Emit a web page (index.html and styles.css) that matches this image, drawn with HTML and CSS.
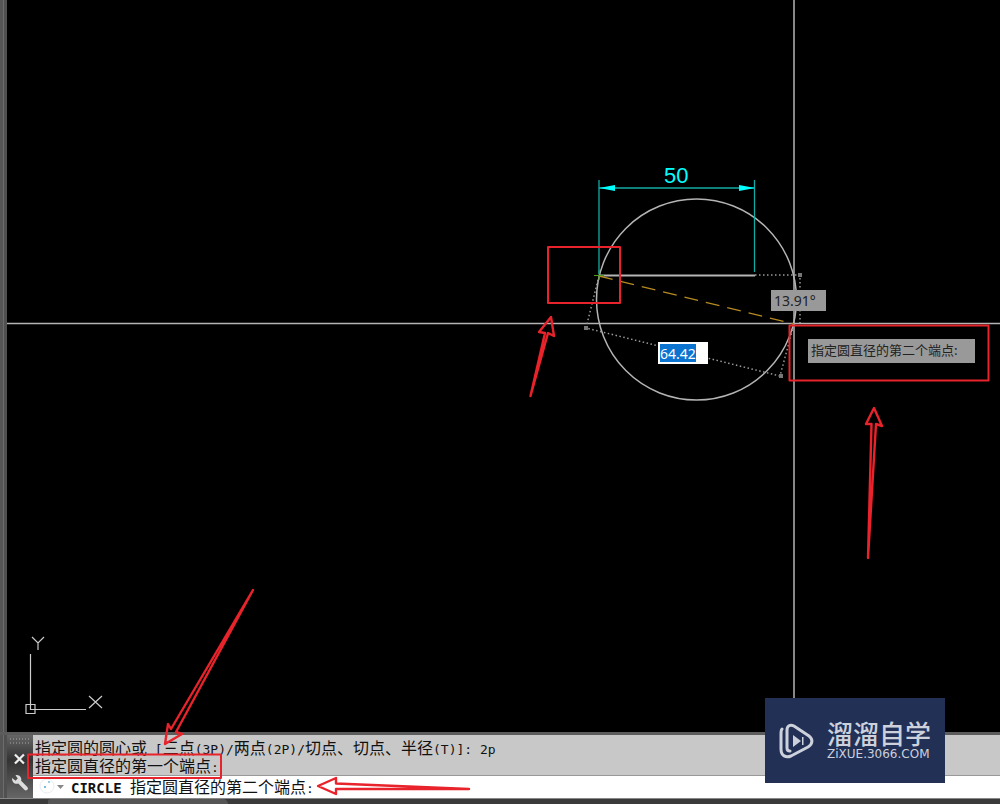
FILE: index.html
```
<!DOCTYPE html>
<html lang="zh-CN">
<head>
<meta charset="utf-8">
<title>CIRCLE</title>
<link rel="stylesheet" href="styles.css">
</head>
<body>
<div class="app">
  <div class="workspace">
    <div class="window-edge"></div>
    <main class="viewport"></main>
  </div>
  <section class="command">
    <div class="window-edge"></div>
    <div class="command-tools">
      <svg class="grip" viewBox="0 0 20 6" aria-hidden="true"><path d="M0 1h20M0 5h20" stroke="#aaa" stroke-width="1" stroke-dasharray="1 2"/></svg>
      <button class="tool" type="button" aria-label="关闭"><svg viewBox="0 0 16 16"><path d="M3.500 4l8 8M11.500 4l-8 8" stroke="#eee" stroke-width="2"/></svg></button>
      <button class="tool" type="button" aria-label="自定义"><svg viewBox="0 0 16 16"><path d="M1 3.500 4 6 6 4 4 1C7 0 10 3 9 6l5.500 5.500a1.800 1.800 0 0 1-2.600 2.600L6.500 8.500C3.500 9.500.5 7 1 3.500Z" fill="#ddd"/></svg></button>
    </div>
    <div class="command-body">
      <div class="history">
        <p>指定圆的圆心或<span class="half"> [</span>三点<span class="half">(3P)/</span>两点<span class="half">(2P)/</span>切点、切点、半径<span class="half">(T)]: 2p</span></p>
        <p>指定圆直径的第一个端点<span class="half">:</span></p>
      </div>
      <div class="prompt">
        <svg class="recent" viewBox="0 0 26 16" aria-hidden="true"><circle cx="8" cy="8" r="7" fill="none" stroke="#e6edf2" stroke-width="1"/><circle cx="6" cy="9" r="1" fill="#48a9d8"/><circle cx="10" cy="4" r="1" fill="#76bfe0"/><path d="M18 7h7l-3.500 4z" fill="#888"/></svg>
        <label for="cmd"><b class="half name">CIRCLE </b>指定圆直径的第二个端点<span class="half">:</span></label>
        <input id="cmd" class="cmd-input" type="text">
      </div>
    </div>
  </section>
  <footer class="status"><div class="status-tab"></div></footer>

  <svg class="drawing" viewBox="0 0 1000 804" aria-hidden="true">
    <g fill="none" stroke="#b4b4b4" stroke-width="1.500">
      <path d="M7 323.500H1000M794 0V732"/>
      <ellipse cx="696.500" cy="299.500" rx="100" ry="100.500"/>
      <path d="M599 275.500H755" stroke-width="2"/>
    </g>
    <g fill="none" stroke="#999" stroke-width="1.500" stroke-dasharray="1.500 2.500">
      <path d="M755 275H800V323M599 276 586 328 780 376 794 324"/>
    </g>
    <path d="M798 273h4v4h-4zM584 326h4v4h-4zM779 374h4v4h-4z" fill="#777"/>
    <path d="M599 276 794 324" stroke="#b78a22" stroke-width="1.300" stroke-dasharray="14 8"/>
    <path d="M594 275.500h10M599 270v10" stroke="#4f9d1d" stroke-width="1"/>
    <g stroke="#12aaa5" stroke-width="1.300" fill="none"><path d="M599 180V274M754.500 180V272M599 188H755"/></g>
    <path d="M599 188l16-3v6zM755 188l-16-3v6z" fill="#0ff"/>
    <text class="dimension" x="664" y="183">50</text>
    <g fill="none" stroke="#ccc" stroke-width="1.200">
      <path d="M30.500 654V709.500H86M26 704.500h9v9h-9zM32 637l6 6 6-6M38 643v7M89 696l13 12M102 696l-13 12"/>
    </g>
  </svg>

  <output class="tip angle">13.91°</output>
  <input class="distance" type="text" value="64.42" aria-label="直径">
  <output class="tip hint">指定圆直径的第二个端点:</output>

  <svg class="drawing" viewBox="0 0 1000 804" aria-hidden="true">
    <g fill="none" stroke="#e8232b" stroke-width="2" stroke-linejoin="round" stroke-linecap="round">
      <path d="M548 247h72v56h-72zM789.500 325.500h199v55h-199zM28 754.500h193v23.500H28z"/>
      <g stroke-width="2.400">
      <path d="M530.500 396 545 333l-6-1 12-15 3 19-6-3z"/>
      <path d="M868 558 871.500 424h-5.500l8-16 8 18-6-2z"/>
      <path d="M253 590 171 729l-3-5-3 20 17-10-6-2z"/>
      <path d="M469 789 336 783.500v-5.500L318 786l18 8v-5z"/>
      </g>
    </g>
  </svg>

  <aside class="brand">
    <svg class="brand-mark" viewBox="0 0 36 36" aria-hidden="true"><path d="M3 6C2 7 2 9 2 11v15c0 7 5 9 10 7l17-9c5-3 5-8 1-11L15 3C11 1 8 3 8 7v18c0 2 1 3 3 3" fill="none" stroke="#cdd1dc" stroke-linecap="round" stroke-width="3"/><path d="M14 12l8 6-8 6zM23 14h1.500v8H23z" fill="#cdd1dc"/></svg>
    <div class="brand-text"><strong>溜溜自学</strong><span>ZiXUE.3066.COM</span></div>
  </aside>
</div>
</body>
</html>
```
FILE: styles.css
```
* { box-sizing: border-box; }
body {
  margin: 0;
  background: #000;
  font-family: "Noto Sans", "Noto Sans CJK SC", sans-serif;
}
button, input { font: inherit; border: 0; padding: 0; background: none; }
.app {
  position: relative;
  display: flex;
  flex-direction: column;
  min-height: 100vh;
  overflow: hidden;
}
.workspace { display: flex; flex: 1; }
.viewport { flex: 1; background: #000; }
.window-edge {
  flex: none;
  width: 7px;
  background: linear-gradient(90deg, #555 0 3px, #6c6c6c 3px 4px, #505050 4px);
}
.command { display: flex; border-top: 3px solid #5c5c5c; border-bottom: 1px solid #888; }
.command-tools {
  display: flex;
  flex-direction: column;
  align-items: center;
  gap: 6px;
  width: 26px;
  padding-top: 3px;
  background: linear-gradient(#666, #333 40%, #666);
}
.grip { width: 20px; height: 6px; }
.tool { width: 18px; height: 18px; cursor: pointer; }
.tool svg { display: block; width: 18px; height: 18px; }
.command-body {
  flex: 1;
  color: #111;
  font-family: "Noto Sans CJK SC", sans-serif;
  font-size: 16px;
  line-height: 18px;
}
.history { padding: 3px 2px 1px; background: #c8c8c8; border-bottom: 1px solid #999; }
.history p { margin: 0; white-space: nowrap; }
.half { font-family: "DejaVu Sans Mono", monospace; font-size: 13px; line-height: 0; white-space: pre; }
.name { font-size: 14px; }
.prompt { display: flex; align-items: center; height: 22px; padding: 0 0 2px 6px; background: #fff; }
.recent { width: 26px; height: 16px; margin-right: 6px; }
.cmd-input { flex: 1; outline: 0; }
.status { height: 5px; padding-left: 48px; background: #3a3a3a; }
.status-tab { width: 180px; height: 5px; background: #555; border-radius: 4px 8px 0 0; }
.drawing {
  position: absolute;
  inset: 0;
  width: 100%;
  height: 100%;
  pointer-events: none;
}
.dimension { fill: #0ff; font-family: "Liberation Sans", sans-serif; font-size: 22px; }
.tip, .distance { position: absolute; font-size: 14px; }
.tip { background: #999; color: #222; white-space: nowrap; }
.angle { left: 771px; top: 290px; width: 55px; height: 21px; padding-left: 3px; line-height: 21px; }
.hint {
  left: 808px;
  top: 339px;
  width: 167px;
  height: 24px;
  padding-left: 3px;
  font-family: "Noto Sans CJK SC", sans-serif;
  font-size: 13px;
  line-height: 21px;
}
.distance {
  left: 658px;
  top: 342px;
  width: 50px;
  height: 22px;
  padding-left: 2px;
  color: #fff;
  background: linear-gradient(#0b73d0, #0b73d0) 2px 2px / 36px 18px no-repeat #fff;
}
.brand {
  position: absolute;
  left: 765px;
  top: 698px;
  display: flex;
  align-items: center;
  gap: 12px;
  width: 180px;
  height: 85px;
  padding-left: 14px;
  background: #223056;
  color: #cdd1dc;
}
.brand-mark { width: 36px; height: 36px; }
.brand-text { display: flex; flex-direction: column; padding-bottom: 4px; white-space: nowrap; }
.brand-text strong { font: 500 26px/30px "Noto Sans CJK SC", sans-serif; }
.brand-text span { font: 12px/12px "DejaVu Sans", sans-serif; }
```
